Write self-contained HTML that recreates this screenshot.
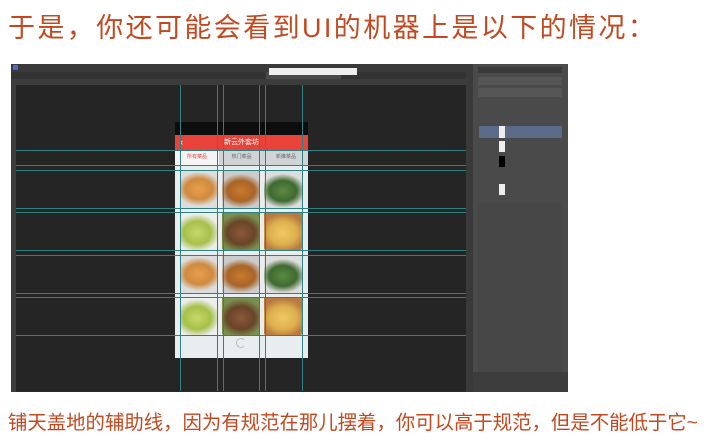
<!DOCTYPE html>
<html><head><meta charset="utf-8"><style>
*{margin:0;padding:0;box-sizing:border-box}
body{width:710px;height:447px;background:#fff;position:relative;overflow:hidden;font-family:"Liberation Sans","Noto Sans CJK SC",sans-serif}
.t1{position:absolute;left:8px;top:6px;font-size:27px;color:#c4481f;letter-spacing:2.4px;white-space:nowrap}
.t2{position:absolute;left:8px;top:406px;font-size:19.4px;color:#c4481f;white-space:nowrap}
.ps{position:absolute;left:11px;top:64px;width:557px;height:328px;background:#2b2b2b}
.abs{position:absolute}
.food{position:absolute;width:38px;height:38px;border-radius:2px}
.g{position:absolute;background:#2f8080;z-index:5}
</style></head><body>
<div class="t1">于是，你还可能会看到UI的机器上是以下的情况：</div>
<div class="ps">
 <div class="abs" style="left:0;top:0;width:461px;height:8px;background:#3a3a3a"></div>
 <div class="abs" style="left:2px;top:1px;width:5px;height:5px;background:#4b6bd0"></div>
 <div class="abs" style="left:0;top:8px;width:461px;height:7px;background:#333"></div>
 <div class="abs" style="left:255px;top:8px;width:75px;height:7px;background:#4a4a4a"></div>
 <div class="abs" style="left:258px;top:4px;width:88px;height:7px;background:#eee"></div>
 <div class="abs" style="left:5px;top:15px;width:456px;height:6px;background:#3c3c3c"></div>
 <div class="abs" style="left:0;top:15px;width:5px;height:313px;background:#3c3c3c"></div>
 <div class="abs" style="left:5px;top:21px;width:450px;height:306px;background:#252525"></div>
 <div class="abs" style="left:455px;top:0;width:7px;height:328px;background:#3a3a3a"></div>
 <div class="abs" style="left:462px;top:0;width:95px;height:328px;background:#4a4a4a"></div>
 <div class="abs" style="left:467px;top:3px;width:84px;height:6px;background:#3a3a3a"></div>
 <div class="abs" style="left:467px;top:13px;width:84px;height:8px;background:#555"></div>
 <div class="abs" style="left:467px;top:24px;width:84px;height:9px;background:#555"></div>
 <div class="abs" style="left:468px;top:62px;width:83px;height:12px;background:#5a6b8a"></div>
 <div class="abs" style="left:488px;top:62px;width:6px;height:12px;background:#eee"></div>
 <div class="abs" style="left:488px;top:77px;width:6px;height:11px;background:#eee"></div>
 <div class="abs" style="left:488px;top:92px;width:6px;height:11px;background:#000"></div>
 <div class="abs" style="left:488px;top:120px;width:6px;height:11px;background:#eee"></div>
 <div class="abs" style="left:467px;top:138px;width:84px;height:170px;background:#474747"></div>
 <div class="abs" style="left:462px;top:308px;width:95px;height:20px;background:#3d3d3d"></div>
</div>
<!-- phone -->
<div class="abs" style="left:175px;top:122px;width:133px;height:13px;background:#0d0d0d"></div>
<div class="abs" style="left:175px;top:135px;width:133px;height:15px;background:#e8423a;color:#fff;font-size:7px;line-height:15px;text-align:center">新云外套坊</div>
<div class="abs" style="left:180px;top:135px;color:#fff;font-size:9px;line-height:15px">‹</div>
<div class="abs" style="left:175px;top:150px;width:133px;height:208px;background:#e8eef0"></div>
<div class="abs" style="left:175px;top:150px;width:44px;height:15px;background:#f4f4f4;color:#e8423a;font-size:5px;line-height:15px;text-align:center">所有菜品</div>
<div class="abs" style="left:219px;top:150px;width:45px;height:15px;background:#d0d4d6;color:#666;font-size:5px;line-height:15px;text-align:center">热门菜品</div>
<div class="abs" style="left:264px;top:150px;width:44px;height:15px;background:#d0d4d6;color:#666;font-size:5px;line-height:15px;text-align:center">新推菜品</div>
<div class="food" style="left:180px;top:170px;background:radial-gradient(ellipse 60% 45% at 50% 50%,#e6a04a,#d08a40 60%,#ddd 100%)"></div>
<div class="food" style="left:222px;top:170px;background:radial-gradient(ellipse 60% 45% at 50% 55%,#c97a2e,#a86428 60%,#ccc 100%)"></div>
<div class="food" style="left:264px;top:170px;background:radial-gradient(ellipse 60% 45% at 50% 55%,#5b8a44,#3f6a30 60%,#ddd 100%)"></div>
<div class="food" style="left:180px;top:212px;background:radial-gradient(ellipse 60% 50% at 45% 55%,#c7d86a,#a6c04a 60%,#eee 100%)"></div>
<div class="food" style="left:222px;top:212px;background:radial-gradient(ellipse 60% 50% at 50% 55%,#8a5a3a,#6a4428 60%,#7a9050 100%)"></div>
<div class="food" style="left:264px;top:212px;background:radial-gradient(ellipse 60% 50% at 50% 55%,#f0c860,#deb050 60%,#b87a40 100%)"></div>
<div class="food" style="left:180px;top:255px;background:radial-gradient(ellipse 60% 45% at 50% 50%,#e6a04a,#d08a40 60%,#ddd 100%)"></div>
<div class="food" style="left:222px;top:255px;background:radial-gradient(ellipse 60% 45% at 50% 55%,#c97a2e,#a86428 60%,#ccc 100%)"></div>
<div class="food" style="left:264px;top:255px;background:radial-gradient(ellipse 60% 45% at 50% 55%,#5b8a44,#3f6a30 60%,#ddd 100%)"></div>
<div class="food" style="left:180px;top:297px;background:radial-gradient(ellipse 60% 50% at 45% 55%,#c7d86a,#a6c04a 60%,#eee 100%)"></div>
<div class="food" style="left:222px;top:297px;background:radial-gradient(ellipse 60% 50% at 50% 55%,#8a5a3a,#6a4428 60%,#7a9050 100%)"></div>
<div class="food" style="left:264px;top:297px;background:radial-gradient(ellipse 60% 50% at 50% 55%,#f0c860,#deb050 60%,#b87a40 100%)"></div>
<div class="abs" style="left:236px;top:338px;width:10px;height:10px;border:1px solid #bbb;border-radius:50%;border-right-color:transparent"></div>
<!-- guides -->
<div class="g" style="left:180px;top:85px;width:1px;height:306px"></div>
<div class="g" style="left:217px;top:85px;width:1px;height:306px"></div>
<div class="g" style="left:223px;top:85px;width:1px;height:306px"></div>
<div class="g" style="left:259px;top:85px;width:1px;height:306px"></div>
<div class="g" style="left:265px;top:85px;width:1px;height:306px"></div>
<div class="g" style="left:302px;top:85px;width:1px;height:306px"></div>
<div class="g" style="left:16px;top:150px;width:450px;height:1px"></div>
<div class="g" style="left:16px;top:165px;width:450px;height:1px"></div>
<div class="g" style="left:16px;top:170px;width:450px;height:1px"></div>
<div class="g" style="left:16px;top:208px;width:450px;height:1px"></div>
<div class="g" style="left:16px;top:212px;width:450px;height:1px"></div>
<div class="g" style="left:16px;top:250px;width:450px;height:1px"></div>
<div class="g" style="left:16px;top:255px;width:450px;height:1px"></div>
<div class="g" style="left:16px;top:293px;width:450px;height:1px"></div>
<div class="g" style="left:16px;top:297px;width:450px;height:1px"></div>
<div class="g" style="left:16px;top:335px;width:450px;height:1px"></div>
<div class="t2">铺天盖地的辅助线，因为有规范在那儿摆着，你可以高于规范，但是不能低于它~</div>
</body></html>
